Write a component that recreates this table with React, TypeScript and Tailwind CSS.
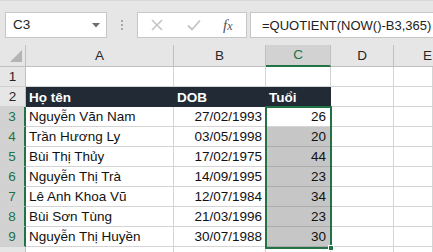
import React from "react";

const FONT = { fontFamily: '"Liberation Sans", Arial, sans-serif' };

type Row = { name: string; dob: string; age: string };

const rows: Row[] = [
  { name: "Nguyễn Văn Nam", dob: "27/02/1993", age: "26" },
  { name: "Trần Hương Ly", dob: "03/05/1998", age: "20" },
  { name: "Bùi Thị Thủy", dob: "17/02/1975", age: "44" },
  { name: "Nguyễn Thị Trà", dob: "14/09/1995", age: "23" },
  { name: "Lê Anh Khoa Vũ", dob: "12/07/1984", age: "34" },
  { name: "Bùi Sơn Tùng", dob: "21/03/1996", age: "23" },
  { name: "Nguyễn Thị Huyền", dob: "30/07/1988", age: "30" },
];

function RowHeader({ n, active }: { n?: number; active?: boolean }) {
  return (
    <div
      className={
        "w-[26px] shrink-0 flex items-center justify-center border-b border-[#d0d0d0] " +
        (active
          ? "bg-[#d2d2d2] text-[#217346] border-r-2 border-r-[#217346]"
          : "bg-[#e6e6e6] text-[#262626] border-r border-r-[#c0c0c0]")
      }
    >
      {n !== undefined && <span className="text-[13.5px] pt-[2px]">{n}</span>}
    </div>
  );
}

function Cell({
  w,
  children,
  align = "left",
  className = "",
}: {
  w: string;
  children?: React.ReactNode;
  align?: "left" | "right";
  className?: string;
}) {
  return (
    <div
      className={
        w +
        " shrink-0 flex items-center border-r border-b border-[#d4d4d4] px-[3px] pt-[2px] text-[13.5px] whitespace-nowrap overflow-hidden " +
        (align === "right" ? "justify-end " : "justify-start ") +
        className
      }
    >
      {children}
    </div>
  );
}

export default function App() {
  return (
    <div className="w-[433px] h-[252px] overflow-hidden bg-white text-[#111]" style={FONT}>
      {/* formula bar */}
      <div className="h-[45px] bg-[#e6e6e6] flex items-start pt-[11px] pl-[5px] border-t border-[#d8d8d8]">
        <div className="w-[102px] h-[26px] bg-white border border-[#c6c6c6] flex items-center pl-[7px] pr-[6px] justify-between">
          <span className="text-[13.5px] text-[#222] pt-[1px]">C3</span>
          <svg width="8" height="5" viewBox="0 0 8 5">
            <path d="M0 0H8L4 4.5Z" fill="#6e6e6e" />
          </svg>
        </div>
        <div className="w-[30px] h-[26px] flex flex-col items-center justify-center gap-[2px]">
          <div className="w-[2px] h-[2px] bg-[#a8a8a8]" />
          <div className="w-[2px] h-[2px] bg-[#a8a8a8]" />
          <div className="w-[2px] h-[2px] bg-[#a8a8a8]" />
        </div>
        <div className="w-[110px] h-[26px] bg-white border border-[#c6c6c6] flex items-center">
          <svg className="ml-[13px]" width="12" height="12" viewBox="0 0 12 12">
            <path d="M1 1L11 11M11 1L1 11" stroke="#c4c4c4" strokeWidth="1.6" />
          </svg>
          <svg className="ml-[24px]" width="14" height="12" viewBox="0 0 14 12">
            <path d="M1 6.5L5 10.5L13 1.5" stroke="#c4c4c4" strokeWidth="1.8" fill="none" />
          </svg>
          <span
            className="ml-[22px] italic text-[15px] text-[#555]"
            style={{ fontFamily: '"Liberation Serif", "Times New Roman", serif' }}
          >
            f<span className="text-[12px]">x</span>
          </span>
        </div>
        <div className="ml-[3px] flex-1 h-[26px] bg-white border border-r-0 border-[#c6c6c6] flex items-center pl-[11px]">
          <span className="text-[13px] text-[#222] pt-[1px] whitespace-nowrap">=QUOTIENT(NOW()-B3,365)</span>
        </div>
      </div>

      {/* grid */}
      <div className="relative">
        {/* column headers */}
        <div className="flex h-[22px] bg-[#e6e6e6] text-[13.5px] text-[#262626]">
          <div className="w-[26px] shrink-0 border-r border-b border-[#c0c0c0] relative">
            <svg className="absolute left-[10px] top-[5px]" width="12" height="12" viewBox="0 0 12 12">
              <path d="M12 0V12H0Z" fill="#b4b4b4" />
            </svg>
          </div>
          <div className="w-[148px] shrink-0 border-r border-b border-[#c0c0c0] flex items-center justify-center pt-[1px]">A</div>
          <div className="w-[92px] shrink-0 border-r border-b border-[#c0c0c0] flex items-center justify-center pt-[1px]">B</div>
          <div className="w-[65px] shrink-0 bg-[#d2d2d2] border-r border-[#c0c0c0] border-b-2 border-b-[#217346] flex items-center justify-center pt-[1px] text-[#217346]">
            C
          </div>
          <div className="w-[63px] shrink-0 border-r border-b border-[#c0c0c0] flex items-center justify-center pt-[1px]">D</div>
          <div className="flex-1 border-b border-[#c0c0c0] flex items-center pl-[29px] pt-[1px]">E</div>
        </div>

        {/* row 1 */}
        <div className="flex h-[20px]">
          <RowHeader n={1} />
          <Cell w="w-[148px]" />
          <Cell w="w-[92px]" />
          <Cell w="w-[65px]" />
          <Cell w="w-[63px]" />
          <Cell w="flex-1" />
        </div>

        {/* row 2: table header */}
        <div className="flex h-[20px]">
          <RowHeader n={2} />
          <div className="w-[305px] shrink-0 flex bg-[#222b35] text-white font-bold text-[13.5px]">
            <div className="w-[148px] shrink-0 flex items-center px-[3px] pt-[2px]">Họ tên</div>
            <div className="w-[92px] shrink-0 flex items-center px-[3px] pt-[2px]">DOB</div>
            <div className="w-[65px] shrink-0 flex items-center px-[3px] pt-[2px]">Tuổi</div>
          </div>
          <Cell w="w-[63px]" />
          <Cell w="flex-1" />
        </div>

        {rows.map((r, i) => (
          <div key={r.name} className="flex h-[20px]">
            <RowHeader n={i + 3} active />
            <Cell w="w-[148px]">{r.name}</Cell>
            <Cell w="w-[92px]" align="right">
              {r.dob}
            </Cell>
            <Cell w="w-[65px]" align="right" className={i === 0 ? "bg-white" : "bg-[#c6c6c6] border-b-[#ababab]"}>
              <span className="pr-[1px]">{r.age}</span>
            </Cell>
            <Cell w="w-[63px]" />
            <Cell w="flex-1" />
          </div>
        ))}

        {/* row 10, mostly below the fold */}
        <div className="flex h-[20px]">
          <RowHeader />
          <Cell w="w-[148px]" />
          <Cell w="w-[92px]" />
          <Cell w="w-[65px]" />
          <Cell w="w-[63px]" />
          <Cell w="flex-1" />
        </div>

        {/* selection outline C3:C9 */}
        <div className="absolute left-[265px] top-[61px] w-[67px] h-[143px] border-2 border-[#217346] pointer-events-none" />
        <div className="absolute left-[328px] top-[200px] w-[6px] h-[6px] bg-[#217346] border border-white pointer-events-none" />
      </div>
    </div>
  );
}
